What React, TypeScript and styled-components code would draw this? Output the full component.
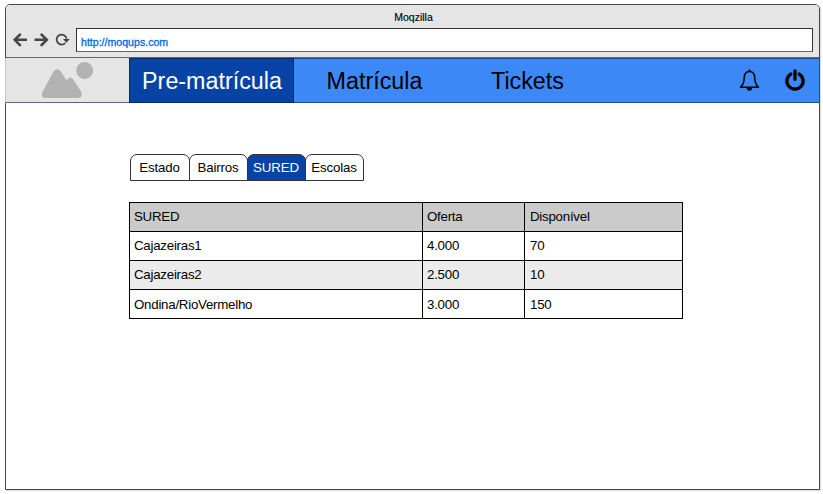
import React from "react";
import styled, { createGlobalStyle } from "styled-components";

const Global = createGlobalStyle`
  * { box-sizing: border-box; }
  body { margin: 0; background: #fff; font-family: "Liberation Sans", Arial, sans-serif; color: #000; }
`;

const Page = styled.div`
  width: 823px;
  height: 494px;
  padding: 4px 0 0 5px;
`;

const Browser = styled.div`
  width: 815px;
  height: 486px;
  border: 1px solid #474747;
  border-radius: 5px 5px 0 0;
  box-shadow: 1px 1px 1px #d8d8d8;
  background: #fff;
`;

const Chrome = styled.header`
  height: 53px;
  background: #e5e5e5;
  border-bottom: 1px solid #62685f;
  border-radius: 4px 4px 0 0;
`;

const Title = styled.div`
  height: 23px;
  padding: 1px 0 0 2px;
  font-size: 10.5px;
  line-height: 23px;
  text-align: center;
  -webkit-text-stroke: 0.15px #000;
`;

const Toolbar = styled.div`
  display: flex;
  align-items: flex-start;
  height: 24px;
  padding-right: 6px;
`;

const BrowserIcons = styled.svg`
  flex: none;
  width: 70px;
  height: 24px;
`;

const Address = styled.div`
  flex: 1;
  height: 24px;
  padding-left: 4px;
  border: 1px solid #333;
  border-bottom-color: #666;
  background: #fff;
  color: #0068e5;
  font-size: 10.6px;
  line-height: 27px;
  -webkit-text-stroke: 0.3px #0068e5;
`;

const Nav = styled.nav`
  display: flex;
  height: 45px;
  margin-left: -1px;
  background: #3c88f7;
`;

const Logo = styled.div`
  width: 124px;
  background: #e5e5e5;
  border-left: 1px solid #c4c4c4;
  border-bottom: 1px solid #58698e;

  svg { display: block; }
`;

const NavItem = styled.a<{ $active?: boolean; $width: number }>`
  width: ${(p) => p.$width}px;
  padding-left: 1px;
  border: solid ${(p) => (p.$active ? "#082b63" : "#244f8f")};
  border-width: ${(p) => (p.$active ? "1px" : "1px 0")};
  background: ${(p) => (p.$active ? "#0743a4" : "transparent")};
  color: ${(p) => (p.$active ? "#fff" : "#000")};
  font-size: 23.3px;
  line-height: 44px;
  text-align: center;
`;

const Actions = styled.div`
  flex: 1;
  border: solid #244f8f;
  border-width: 1px 0;

  svg { display: block; margin-left: auto; }
`;

const Content = styled.main`
  padding: 51px 0 0 123px;
`;

const Tabs = styled.div`
  display: flex;
  margin-left: 1px;
`;

const Tab = styled.button<{ $active?: boolean; $width: number }>`
  width: ${(p) => p.$width}px;
  height: 27px;
  margin-right: -1px;
  padding: 0 1px 0 0;
  border: 1px solid #333;
  border-radius: 7px 7px 0 0;
  background: ${(p) => (p.$active ? "#0743a4" : "#fff")};
  color: ${(p) => (p.$active ? "#fff" : "#000")};
  font: 13.3px/25px "Liberation Sans", Arial, sans-serif;
  letter-spacing: -0.15px;
`;

const Table = styled.table`
  width: 554px;
  margin-top: 21px;
  border-collapse: collapse;
  table-layout: fixed;
  font-size: 13.3px;
  letter-spacing: -0.25px;
`;

const Row = styled.tr<{ $fill: string }>`
  height: 29px;
  background: ${(p) => p.$fill};

  &:last-child td { padding-top: 1px; line-height: 27px; }
`;

const Cell = styled.td`
  height: 29px;
  padding: 0 0 0 4px;
  border: 1px solid #000;
  line-height: 28px;

  &:last-child { padding-left: 5px; }
`;

const rows = [
  { fill: "#cbcbcb", cells: ["SURED", "Oferta", "Disponível"] },
  { fill: "#fff", cells: ["Cajazeiras1", "4.000", "70"] },
  { fill: "#ebebeb", cells: ["Cajazeiras2", "2.500", "10"] },
  { fill: "#fff", cells: ["Ondina/RioVermelho", "3.000", "150"] },
];

export default function App() {
  return (
    <Page>
      <Global />
      <Browser>
        <Chrome>
          <Title>Moqzilla</Title>
          <Toolbar>
            <BrowserIcons viewBox="6 28 70 24" fill="none" stroke="#444" strokeWidth="2.6">
              <path d="M27 39.8H15M20.7 33.8L14.7 39.8L20.7 45.8M34.5 39.8H46.5M40.8 33.8L46.8 39.8L40.8 45.8" />
              <path d="M65.3 43A5 5 0 1 1 66.6 38.7" strokeWidth="1.8" />
              <path d="M63 39H69.8L66.4 42.8Z" fill="#444" stroke="none" />
            </BrowserIcons>
            <Address>http://moqups.com</Address>
          </Toolbar>
        </Chrome>
        <Nav>
          <Logo>
            <svg width="123" height="44" viewBox="6 58 123 44" fill="#b2b2b2">
              <circle cx="84.7" cy="70.5" r="8.4" />
              <path d="M42.4 92L53 72.5Q57.2 66 61.5 72.5L66.5 80.3Q70.5 74.8 74 80.5L81 91.5Q83.8 97.8 78 98H46Q40 98 42.4 92Z" />
            </svg>
          </Logo>
          <NavItem $active $width={165}>Pre-matrícula</NavItem>
          <NavItem $width={160}>Matrícula</NavItem>
          <NavItem $width={146}>Tickets</NavItem>
          <Actions>
            <svg width="96" height="42" viewBox="723 59 96 42" fill="none" stroke="#000">
              <path d="M740.5 87.2Q744 84.5 744.3 77.5C744.4 73.3 746.3 71.4 749.4 71.4S754.5 73.3 754.7 77.5Q755 84.5 758.5 87.2Z" strokeWidth="1.5" strokeLinejoin="round" />
              <path d="M749.4 69.5V71.5" strokeWidth="1.8" />
              <path d="M746.4 87.5Q747 90.8 749.4 90.8T752.4 87.5Z" fill="#000" stroke="none" />
              <path d="M790.8 74.1A8.1 8.1 0 1 0 799.2 74.1M795 70.8V79.3" strokeWidth="3.3" strokeLinecap="round" />
            </svg>
          </Actions>
        </Nav>
        <Content>
          <Tabs>
            <Tab $width={60}>Estado</Tab>
            <Tab $width={59}>Bairros</Tab>
            <Tab $width={59} $active>SURED</Tab>
            <Tab $width={59}>Escolas</Tab>
          </Tabs>
          <Table>
            <colgroup>
              <col style={{ width: 293 }} />
              <col style={{ width: 102 }} />
              <col />
            </colgroup>
            <tbody>
              {rows.map((row) => (
                <Row key={row.cells[0]} $fill={row.fill}>
                  {row.cells.map((cell) => <Cell key={cell}>{cell}</Cell>)}
                </Row>
              ))}
            </tbody>
          </Table>
        </Content>
      </Browser>
    </Page>
  );
}
